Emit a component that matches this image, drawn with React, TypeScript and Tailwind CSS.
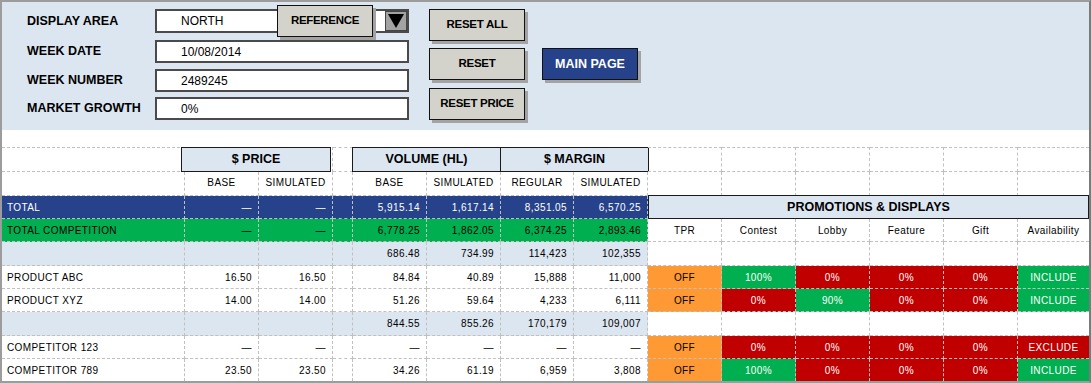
import React from "react";

const D = "border-dashed border-[#c0c0c0]";

type Kind = "total" | "comp" | "sub" | "plain";
type P = [string, "o" | "g" | "r"];

const rows: { label: string; kind: Kind; vals: string[]; promo?: P[] | "head" | "box" }[] = [
  { label: "TOTAL", kind: "total", vals: ["—", "—", "5,915.14", "1,617.14", "8,351.05", "6,570.25"], promo: "box" },
  { label: "TOTAL COMPETITION", kind: "comp", vals: ["—", "—", "6,778.25", "1,862.05", "6,374.25", "2,893.46"], promo: "head" },
  { label: "", kind: "sub", vals: ["", "", "686.48", "734.99", "114,423", "102,355"] },
  {
    label: "PRODUCT ABC",
    kind: "plain",
    vals: ["16.50", "16.50", "84.84", "40.89", "15,888", "11,000"],
    promo: [["OFF", "o"], ["100%", "g"], ["0%", "r"], ["0%", "r"], ["0%", "r"], ["INCLUDE", "g"]],
  },
  {
    label: "PRODUCT XYZ",
    kind: "plain",
    vals: ["14.00", "14.00", "51.26", "59.64", "4,233", "6,111"],
    promo: [["OFF", "o"], ["0%", "r"], ["90%", "g"], ["0%", "r"], ["0%", "r"], ["INCLUDE", "g"]],
  },
  { label: "", kind: "sub", vals: ["", "", "844.55", "855.26", "170,179", "109,007"] },
  {
    label: "COMPETITOR 123",
    kind: "plain",
    vals: ["—", "—", "—", "—", "—", "—"],
    promo: [["OFF", "o"], ["0%", "r"], ["0%", "r"], ["0%", "r"], ["0%", "r"], ["EXCLUDE", "r"]],
  },
  {
    label: "COMPETITOR 789",
    kind: "plain",
    vals: ["23.50", "23.50", "34.26", "61.19", "6,959", "3,808"],
    promo: [["OFF", "o"], ["100%", "g"], ["0%", "r"], ["0%", "r"], ["0%", "r"], ["INCLUDE", "g"]],
  },
];

const kindCls: Record<Kind, string> = {
  total: "bg-[#26428b] text-white",
  comp: "bg-[#00b050] text-black",
  sub: "bg-[#dce6f1] text-black",
  plain: "bg-white text-black",
};

const promoCls = {
  o: "bg-[#ff9933] text-black",
  g: "bg-[#00b050] text-white",
  r: "bg-[#c00000] text-white",
};

const promoHeads = ["TPR", "Contest", "Lobby", "Feature", "Gift", "Availability"];

function Btn({ children, className = "" }: { children: React.ReactNode; className?: string }) {
  return (
    <div
      className={
        "w-[96px] h-[32px] bg-[#d4d3cb] border border-[#111] shadow-[3px_3px_0_#a3a3a3] flex items-center justify-center text-[11.5px] font-bold tracking-[-0.3px] text-black " +
        className
      }
    >
      {children}
    </div>
  );
}

function Field({ value, className = "", children }: { value: string; className?: string; children?: React.ReactNode }) {
  return (
    <div className={"relative w-[254px] h-full bg-white border-2 border-[#4a4a4a] flex items-center text-[12px] " + className}>
      <span className="pl-[24px] font-normal">{value}</span>
      {children}
    </div>
  );
}

export default function App() {
  return (
    <div className="w-[1091px] h-[383px] border-2 border-[#9c9c9c] border-r-[#7a7a7a] bg-white overflow-hidden font-['Liberation_Sans',Arial,sans-serif] text-black">
      {/* top panel */}
      <div className="h-[128px] bg-[#dce6f1] flex">
        <div className="ml-[25px] flex flex-col text-[12.5px] font-bold">
          <div className="mt-[7px] h-[24px] flex items-center">
            <div className="w-[128px]">DISPLAY AREA</div>
            <Field value="NORTH">
              <div className="ml-auto h-full w-[22px] bg-[#a3a3a3] border border-[#444] flex items-center justify-center">
                <svg width="18" height="16" viewBox="0 0 18 16">
                  <polygon points="1,1 17,1 9,15" fill="#000" />
                </svg>
              </div>
              <div className="absolute left-[120px] top-[-6px]">
                <Btn>REFERENCE</Btn>
              </div>
            </Field>
          </div>
          <div className="mt-[7px] h-[23px] flex items-center">
            <div className="w-[128px]">WEEK DATE</div>
            <Field value="10/08/2014" />
          </div>
          <div className="mt-[6px] h-[23px] flex items-center">
            <div className="w-[128px]">WEEK NUMBER</div>
            <Field value="2489245" />
          </div>
          <div className="mt-[5px] h-[23px] flex items-center">
            <div className="w-[128px]">MARKET GROWTH</div>
            <Field value="0%" />
          </div>
        </div>
        <div className="ml-[20px] mt-[7px] flex flex-col">
          <Btn>RESET ALL</Btn>
          <Btn className="mt-[7px]">RESET</Btn>
          <Btn className="mt-[8px]">RESET PRICE</Btn>
        </div>
        <div className="ml-[17px] mt-[46px] w-[96px] h-[32px] bg-[#26428b] border border-[#111] shadow-[3px_3px_0_#a3a3a3] flex items-center justify-center text-white text-[12.5px] font-bold">
          MAIN PAGE
        </div>
      </div>

      {/* table */}
      <div className="mt-[17px] grid grid-cols-[183px_74px_74px_20px_74px_74px_73px_74px_74px_74px_74px_74px_74px_71px] grid-rows-[25px_24px_23px_23px_24px_23px_23px_24px_23px_22px] text-[10px] tracking-[0.4px]">
        {/* header row 1 */}
        <div className={D + " border-t border-b"} />
        <div className={D + " col-span-2 border-r"}>
          <div className="-ml-[4px] mr-px h-full border border-[#1a1a1a] bg-[#dce6f1] flex items-center justify-center text-[12.5px] font-bold tracking-normal">
            $ PRICE
          </div>
        </div>
        <div className={D + " border-t border-b"} />
        <div className="col-span-2 -ml-px border border-[#1a1a1a] bg-[#dce6f1] flex items-center justify-center text-[12.5px] font-bold tracking-normal">
          VOLUME (HL)
        </div>
        <div className="col-span-2 -mr-px border-y border-r border-[#1a1a1a] bg-[#dce6f1] flex items-center justify-center text-[12.5px] font-bold tracking-normal">
          $ MARGIN
        </div>
        <div className={D + " border-t border-b border-r"} />
        <div className={D + " border-t border-b border-r"} />
        <div className={D + " border-t border-b border-r"} />
        <div className={D + " border-t border-b border-r"} />
        <div className={D + " border-t border-b border-r"} />
        <div className={D + " border-t border-b"} />

        {/* header row 2 */}
        {["", "BASE", "SIMULATED", "", "BASE", "SIMULATED", "REGULAR", "SIMULATED", "", "", "", "", "", ""].map((t, i) => (
          <div
            key={"h2" + i}
            className={D + " border-b flex items-center justify-center pb-[2px] " + (i === 13 ? "" : "border-r")}
          >
            {t}
          </div>
        ))}

        {rows.map((r, ri) => {
          const last = ri === rows.length - 1;
          const bb = last ? "" : "border-b";
          const kc = kindCls[r.kind];
          const cells: React.ReactNode[] = [];
          cells.push(
            <div key="l" className={`${D} ${bb} border-r ${kc} flex items-center pl-[5px]`}>
              {r.label}
            </div>
          );
          [r.vals[0], r.vals[1], "", r.vals[2], r.vals[3], r.vals[4], r.vals[5]].forEach((v, i) => {
            cells.push(
              <div key={"v" + i} className={`${D} ${bb} border-r ${kc} flex items-center justify-end pr-[6px]`}>
                {v}
              </div>
            );
          });
          if (r.promo === "box") {
            cells.push(
              <div
                key="box"
                className="col-span-6 -mt-px border border-[#1a1a1a] bg-[#dce6f1] flex items-center justify-center text-[12.5px] font-bold tracking-normal"
              >
                PROMOTIONS &amp; DISPLAYS
              </div>
            );
          } else {
            for (let i = 0; i < 6; i++) {
              let content = "";
              let pc = "bg-white text-black";
              if (r.promo === "head") content = promoHeads[i];
              else if (Array.isArray(r.promo)) {
                content = r.promo[i][0];
                pc = promoCls[r.promo[i][1]];
              }
              cells.push(
                <div
                  key={"p" + i}
                  className={`${D} ${bb} ${i === 5 ? "" : "border-r"} ${pc} flex items-center justify-center`}
                >
                  {content}
                </div>
              );
            }
          }
          return <React.Fragment key={"r" + ri}>{cells}</React.Fragment>;
        })}
      </div>
    </div>
  );
}
